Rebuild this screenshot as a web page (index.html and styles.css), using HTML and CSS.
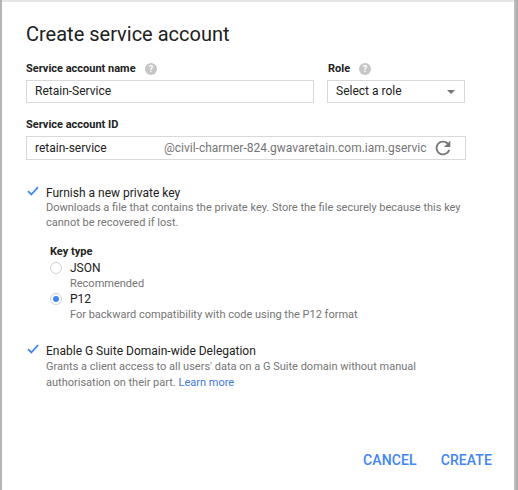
FILE: index.html
```html
<!DOCTYPE html>
<html>
<head>
<meta charset="utf-8">
<link rel="stylesheet" href="styles.css">
</head>
<body>
<div class="dialog">
  <h1 class="title">Create service account</h1>
  <div class="row">
    <div class="field name-field">
      <div class="label">Service account name <svg class="help" viewBox="0 0 12 12" width="12" height="12"><circle cx="6" cy="6" r="6" fill="#c6c6c6"/><text x="6" y="9.2" text-anchor="middle" font-family="Roboto" font-weight="700" font-size="9" fill="#fff">?</text></svg></div>
      <div class="input">Retain-Service</div>
    </div>
    <div class="field role-field">
      <div class="label">Role <svg class="help" viewBox="0 0 12 12" width="12" height="12"><circle cx="6" cy="6" r="6" fill="#c6c6c6"/><text x="6" y="9.2" text-anchor="middle" font-family="Roboto" font-weight="700" font-size="9" fill="#fff">?</text></svg></div>
      <div class="input select"><span>Select a role</span><svg class="arrow" viewBox="0 0 8 4" width="8" height="4"><path d="M0 0h8L4 4z" fill="#757575"/></svg></div>
    </div>
  </div>
  <div class="field id-field">
    <div class="label">Service account ID</div>
    <div class="input idbox">
      <span class="id-name">retain-service</span>
      <span class="id-domain">@civil-charmer-824.gwavaretain.com.iam.gservic</span>
      <svg class="refresh" viewBox="0 0 24 24" width="22" height="22"><path fill="#757575" d="M17.65 6.35C16.2 4.9 14.21 4 12 4c-4.42 0-7.99 3.58-7.99 8s3.57 8 7.99 8c3.73 0 6.84-2.55 7.73-6h-2.08c-.82 2.33-3.04 4-5.650 4-3.31 0-6-2.69-6-6s2.69-6 6-6c1.66 0 3.14.69 4.22 1.78L13 11h7V4l-2.35 2.35z"/></svg>
    </div>
  </div>

  <div class="check check1">
    <svg class="tick" viewBox="0 0 12 10" width="12" height="10"><path d="M1 5.2L4.3 8.5L11 1.2" fill="none" stroke="#4285f4" stroke-width="1.8"/></svg>
    <div class="check-body">
      <div class="check-title">Furnish a new private key</div>
      <div class="desc">Downloads a file that contains the private key. Store the file securely because this key cannot be recovered if lost.</div>
    </div>
  </div>

  <div class="keytype">
    <div class="label">Key type</div>
    <div class="radio">
      <span class="dot"></span>
      <div>
        <div class="radio-title">JSON</div>
        <div class="desc">Recommended</div>
      </div>
    </div>
    <div class="radio">
      <span class="dot on"></span>
      <div>
        <div class="radio-title">P12</div>
        <div class="desc">For backward compatibility with code using the P12 format</div>
      </div>
    </div>
  </div>

  <div class="check check2">
    <svg class="tick" viewBox="0 0 12 10" width="12" height="10"><path d="M1 5.2L4.3 8.5L11 1.2" fill="none" stroke="#4285f4" stroke-width="1.8"/></svg>
    <div class="check-body">
      <div class="check-title">Enable G Suite Domain-wide Delegation</div>
      <div class="desc">Grants a client access to all users' data on a G Suite domain without manual authorisation on their part. <span class="link">Learn more</span></div>
    </div>
  </div>

  <div class="actions">
    <span class="btn">CANCEL</span>
    <span class="btn">CREATE</span>
  </div>
</div>
</body>
</html>
```
FILE: styles.css
```css
html, body {
  margin: 0;
  padding: 0;
}
body {
  width: 518px;
  height: 490px;
  overflow: hidden;
  background: linear-gradient(to right, #b4b4b4 0, #b4b4b4 2px, #e6e6e6 2px, #e6e6e6 514px, #c2c2c2 514px, #a8a8a8 518px);
  font-family: Roboto, "Liberation Sans", sans-serif;
  color: #212121;
}
.dialog {
  margin: 2px 4px 0 2px;
  height: 488px;
  background: #fff;
  box-sizing: border-box;
  padding: 20px 24px 0 24px;
  position: relative;
}
.title {
  margin: 0;
  font-size: 20px;
  font-weight: 400;
  line-height: 24px;
  color: #212121;
}
.row {
  display: flex;
  gap: 13px;
  margin-top: 16px;
}
.label {
  font-size: 11px;
  font-weight: 700;
  line-height: 14px;
  color: #212121;
  display: flex;
  align-items: center;
  gap: 9px;
  margin-bottom: 4px;
}
.help { display: block; }
.input {
  height: 23px;
  box-sizing: border-box;
  border: 1px solid #d9d9d9;
  font-size: 12px;
  line-height: 21px;
  padding: 0 8px;
  color: #212121;
}
.name-field .input { width: 288px; }
.role-field .label { margin-left: 1px; }
.select {
  width: 138px;
  display: flex;
  align-items: center;
  justify-content: space-between;
  padding-right: 9px;
}
.id-field { margin-top: 15px; }
.idbox {
  width: 440px;
  height: 24px;
  display: flex;
  align-items: center;
  white-space: nowrap;
  padding-right: 11px;
}
.id-name { width: 129px; flex: none; }
.id-domain { color: #757575; flex: 1; }
.refresh { flex: none; margin-left: 2px; }
.check {
  display: flex;
  gap: 7px;
  margin-left: 1px;
}
.check1 { margin-top: 25px; }
.check2 { margin-top: 21px; }
.check-body { width: 420px; }
.tick { flex: none; margin-top: 1px; }
.check-title {
  font-size: 12px;
  line-height: 16px;
}
.desc {
  font-size: 11px;
  line-height: 16px;
  color: #757575;
}
.check1 .desc { line-height: 15px; margin-top: -1px; }
.link { color: #3b78e7; }
.keytype {
  margin-top: 15px;
  margin-left: 24px;
}
.keytype .label { margin-bottom: 1px; }
.radio {
  display: flex;
  gap: 8px;
}
.radio .desc { line-height: 15px; }
.radio-title { font-size: 12px; line-height: 16px; }
.dot {
  flex: none;
  width: 12px;
  height: 12px;
  box-sizing: border-box;
  border: 1px solid #d0d0d0;
  border-radius: 50%;
  margin-top: 2px;
  position: relative;
}
.dot.on::after {
  content: "";
  position: absolute;
  left: 2px;
  top: 2px;
  width: 6px;
  height: 6px;
  border-radius: 50%;
  background: #4285f4;
}
.actions {
  position: absolute;
  right: 22px;
  bottom: 22px;
  display: flex;
  gap: 24px;
}
.btn {
  font-size: 14px;
  font-weight: 500;
  color: #4285f4;
  letter-spacing: 0.1px;
}
```
